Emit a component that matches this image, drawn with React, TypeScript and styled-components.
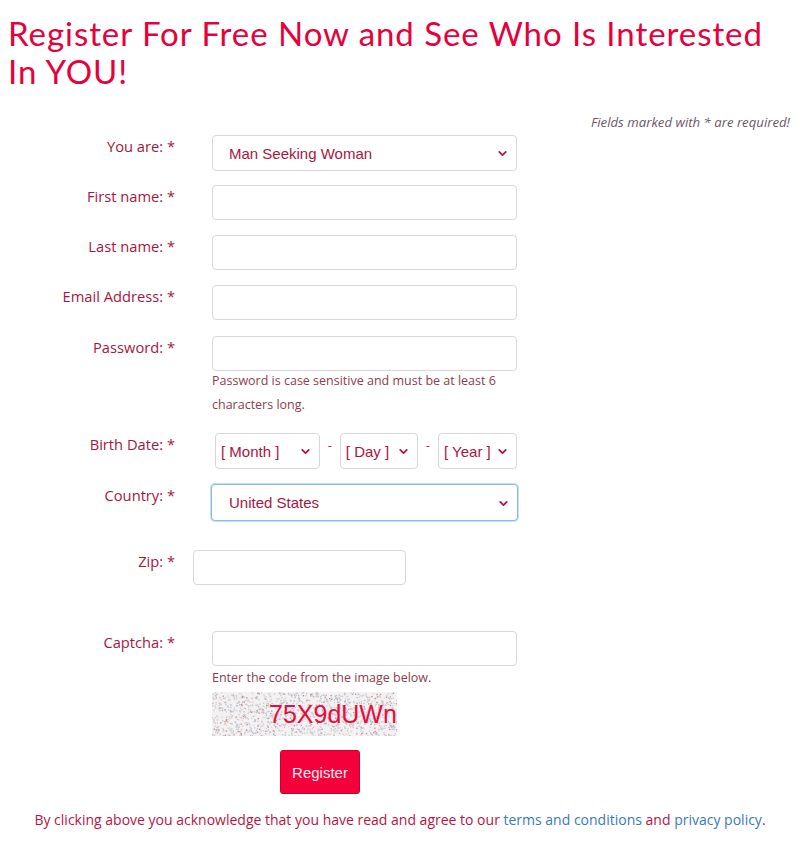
import React from "react";
import styled, { createGlobalStyle } from "styled-components";
import { ChevronDown } from "lucide-react";

const GlobalStyle = createGlobalStyle`
  body {
    margin: 0;
    background: #ffffff;
    font-family: "Open Sans", "Noto Sans", sans-serif;
  }
`;

const Page = styled.div`
  width: 800px;
  padding: 0 0 30px;
`;

const Title = styled.h1`
  max-width: 770px;
  margin: 0;
  padding: 14px 8px 0;
  font-family: "Lato", "Noto Sans", sans-serif;
  font-weight: 400;
  font-size: 33px;
  line-height: 38px;
  letter-spacing: 0.95px;
  color: #e6003c;
`;

const Required = styled.p`
  margin: 23px 10px 0 0;
  text-align: right;
  font-size: 13.2px;
  font-style: italic;
  color: #6b5866;
`;

const Form = styled.form`
  display: flex;
  flex-direction: column;
`;

const Row = styled.div<{ $top: number }>`
  display: grid;
  grid-template-columns: 175px 305px;
  column-gap: 37px;
  margin-top: ${(p) => p.$top}px;
`;

const Label = styled.label`
  padding-top: 1px;
  text-align: right;
  font-size: 14.7px;
  line-height: 20px;
  color: #a8163e;
`;

const Control = styled.div<{ $shift?: number }>`
  display: flex;
  flex-direction: column;
  margin-left: ${(p) => p.$shift ?? 0}px;
`;

const TextInput = styled.input<{ $width?: number }>`
  box-sizing: border-box;
  width: ${(p) => p.$width ?? 305}px;
  height: 35px;
  border: 1px solid #d9d6da;
  border-radius: 4px;
  background: #fff;
`;

const Help = styled.div<{ $top: number }>`
  margin-top: ${(p) => p.$top}px;
  font-size: 12.5px;
  line-height: 24px;
  color: #8e3c4e;
`;

const SelectWrap = styled.div<{ $width: number }>`
  position: relative;
  width: ${(p) => p.$width}px;
`;

const Select = styled.select<{ $pad: number; $focus?: boolean }>`
  appearance: none;
  box-sizing: border-box;
  width: 100%;
  height: ${(p) => (p.$focus ? 37 : 36)}px;
  padding: 0 24px 0 ${(p) => p.$pad}px;
  border: 1px solid ${(p) => (p.$focus ? "#8dbbe6" : "#d9d6da")};
  box-shadow: ${(p) => (p.$focus ? "0 0 0 1px #c5dcf2" : "none")};
  border-radius: 4px;
  background: #fff;
  font-family: "Liberation Sans", Arial, sans-serif;
  font-size: 15px;
  color: #a8163e;
  outline: none;
`;

const Arrow = styled(ChevronDown)`
  position: absolute;
  right: 8px;
  top: 50%;
  margin-top: -6px;
  pointer-events: none;
`;

const DateLine = styled.div`
  display: flex;
  align-items: flex-start;
  gap: 8px;
  margin-left: 3px;
`;

const Dash = styled.span`
  padding-top: 3px;
  font-size: 13px;
  color: #8e3c4e;
`;

const Captcha = styled.svg`
  display: block;
  margin-top: 2px;
`;

const Submit = styled.div`
  display: flex;
  padding-left: 280px;
  margin-top: 14px;
`;

const Button = styled.button`
  width: 80px;
  height: 44px;
  border: 1px solid #c9002f;
  border-radius: 3px;
  background: #f4003a;
  color: #f2eef4;
  font-family: "Liberation Sans", Arial, sans-serif;
  font-size: 15px;
`;

const Footer = styled.p`
  margin: 16px 0 0;
  text-align: center;
  font-size: 14px;
  color: #b8143f;
`;

const Link = styled.a`
  color: #3b7ab8;
  text-decoration: none;
`;

const SelectBox = ({
  width,
  pad,
  value,
  focus,
}: {
  width: number;
  pad: number;
  value: string;
  focus?: boolean;
}) => (
  <SelectWrap $width={width}>
    <Select $pad={pad} $focus={focus} defaultValue={value}>
      <option>{value}</option>
    </Select>
    <Arrow size={13} strokeWidth={3.4} color="#b0163f" />
  </SelectWrap>
);

const noise = (() => {
  const dots: { x: number; y: number; c: string }[] = [];
  let s = 17;
  const rnd = () => {
    s = (s * 9301 + 49297) % 233280;
    return s / 233280;
  };
  const colors = ["#c9c4c8", "#d8c6c4", "#bcc8d8", "#cfcfcf", "#b98a8a", "#e0d4d0", "#a9bcd6"];
  for (let i = 0; i < 1200; i++) {
    dots.push({ x: rnd() * 185, y: rnd() * 44, c: colors[Math.floor(rnd() * colors.length)] });
  }
  return dots;
})();

const CaptchaImage = () => (
  <Captcha width="185" height="44" viewBox="0 0 185 44">
    <rect width="185" height="44" fill="#f3f1f1" />
    {noise.map((d, i) => (
      <rect key={i} x={d.x} y={d.y} width="1.3" height="1.3" fill={d.c} />
    ))}
    <text
      x="57"
      y="31"
      fontFamily="Liberation Sans, Arial, sans-serif"
      fontSize="25"
      fill="#ea0a3c"
    >
      75X9dUWn
    </text>
  </Captcha>
);

const App = () => (
  <Page>
    <GlobalStyle />
    <Title>Register For Free Now and See Who Is Interested In YOU!</Title>
    <Required>Fields marked with * are required!</Required>
    <Form>
      <Row $top={4}>
        <Label>You are: *</Label>
        <Control>
          <SelectBox width={305} pad={16} value="Man Seeking Woman" />
        </Control>
      </Row>
      <Row $top={14}>
        <Label>First name: *</Label>
        <Control>
          <TextInput />
        </Control>
      </Row>
      <Row $top={15}>
        <Label>Last name: *</Label>
        <Control>
          <TextInput />
        </Control>
      </Row>
      <Row $top={15}>
        <Label>Email Address: *</Label>
        <Control>
          <TextInput />
        </Control>
      </Row>
      <Row $top={16}>
        <Label>Password: *</Label>
        <Control>
          <TextInput type="password" />
          <Help $top={-2}>Password is case sensitive and must be at least 6 characters long.</Help>
        </Control>
      </Row>
      <Row $top={16}>
        <Label>Birth Date: *</Label>
        <Control>
          <DateLine>
            <SelectBox width={106} pad={5} value="[ Month ]" />
            <Dash>-</Dash>
            <SelectBox width={79} pad={5} value="[ Day ]" />
            <Dash>-</Dash>
            <SelectBox width={80} pad={5} value="[ Year ]" />
          </DateLine>
        </Control>
      </Row>
      <Row $top={15}>
        <Label>Country: *</Label>
        <Control $shift={-1}>
          <SelectBox width={307} pad={17} value="United States" focus />
        </Control>
      </Row>
      <Row $top={29}>
        <Label>Zip: *</Label>
        <Control $shift={-19}>
          <TextInput $width={213} />
        </Control>
      </Row>
      <Row $top={46}>
        <Label>Captcha: *</Label>
        <Control>
          <TextInput />
          <Help $top={0}>Enter the code from the image below.</Help>
          <CaptchaImage />
        </Control>
      </Row>
      <Submit>
        <Button type="button">Register</Button>
      </Submit>
    </Form>
    <Footer>
      By clicking above you acknowledge that you have read and agree to our{" "}
      <Link href="#">terms and conditions</Link> and <Link href="#">privacy policy</Link>.
    </Footer>
  </Page>
);

export default App;
